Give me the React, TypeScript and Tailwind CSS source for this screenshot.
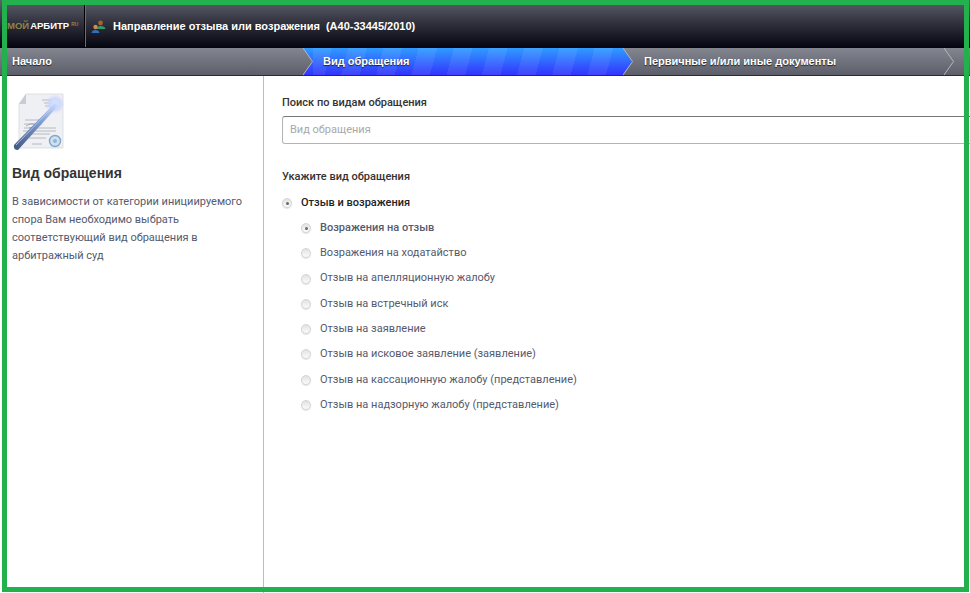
import React from "react";

const options = [
  "Возражения на отзыв",
  "Возражения на ходатайство",
  "Отзыв на апелляционную жалобу",
  "Отзыв на встречный иск",
  "Отзыв на заявление",
  "Отзыв на исковое заявление (заявление)",
  "Отзыв на кассационную жалобу (представление)",
  "Отзыв на надзорную жалобу (представление)",
];

function Radio({ checked }: { checked: boolean }) {
  return (
    <span className="relative block w-[10px] h-[10px] shrink-0 rounded-full border border-[#d4d4d4] bg-[linear-gradient(180deg,#e2e2e2,#fbfbfb)] shadow-[0_1px_1px_rgba(0,0,0,0.12)]">
      {checked && <span className="absolute left-[2.5px] top-[2.5px] w-[3px] h-[3px] rounded-full bg-[#6a6a6a]" />}
    </span>
  );
}

function Chevron({ from, to }: { from: string; to: string }) {
  return (
    <svg width="10" height="27" viewBox="0 0 10 27" className="block shrink-0">
      <defs>
        <linearGradient id={`g-${from}`} x1="0" y1="0" x2="0" y2="1">
          <stop offset="0" stopColor={from === "grey" ? "#83868f" : "#2f9cff"} />
          <stop offset="1" stopColor={from === "grey" ? "#5c5f69" : "#3333ff"} />
        </linearGradient>
        <linearGradient id={`t-${to}`} x1="0" y1="0" x2="0" y2="1">
          <stop offset="0" stopColor={to === "grey" ? "#83868f" : "#2f9cff"} />
          <stop offset="1" stopColor={to === "grey" ? "#5c5f69" : "#3333ff"} />
        </linearGradient>
      </defs>
      <rect width="10" height="27" fill={`url(#t-${to})`} />
      <path d="M0 0 L9.5 13.5 L0 27 Z" fill={`url(#g-${from})`} />
      <path d="M0 0 L9.5 13.5 L0 27" fill="none" stroke="#b4b6bc" strokeWidth="1" />
    </svg>
  );
}

function DocIcon() {
  return (
    <svg width="54" height="60" viewBox="0 0 54 60" className="block">
      <defs>
        <linearGradient id="wand" x1="0" y1="1" x2="1" y2="0">
          <stop offset="0" stopColor="#41557f" />
          <stop offset="0.6" stopColor="#7d9ad0" />
          <stop offset="1" stopColor="#cfe0ff" />
        </linearGradient>
        <radialGradient id="glow">
          <stop offset="0" stopColor="#cfe6ff" />
          <stop offset="0.6" stopColor="#c8d4ff" stopOpacity="0.8" />
          <stop offset="1" stopColor="#e6d8ff" stopOpacity="0" />
        </radialGradient>
      </defs>
      <path d="M14 2 H51 V56 H7 V12 Z" fill="#eef0f3" stroke="#d4d6da" strokeWidth="0.7" />
      <path d="M14 2 V12 H7 Z" fill="#c9ccd2" />
      <g stroke="#a7abb3" strokeWidth="0.8">
        <path d="M30 8 H40 M32 11 H40 M33 14 H40 M13 28 H28 M12 32 H30 M12 36 H44 M11 39 H44 M16 42 H38 M17 46 H34 M20 52 H30" />
      </g>
      <path d="M14 34 q6 -4 10 -1 q-4 3 -7 3" fill="none" stroke="#8b8f98" strokeWidth="0.7" />
      <circle cx="43" cy="49" r="5.5" fill="#cfe0ee" stroke="#7fa7cf" strokeWidth="1.4" />
      <circle cx="43" cy="49" r="2" fill="#8fb5d8" />
      <circle cx="43" cy="12" r="10" fill="url(#glow)" />
      <path d="M2 53 L43 11 L46 14 L6 58 Q1 58 2 53 Z" fill="url(#wand)" />
      <path d="M4 53 L43 13" stroke="#c0d0ee" strokeWidth="0.8" />
    </svg>
  );
}

function PeopleIcon() {
  return (
    <svg width="15" height="14" viewBox="0 0 15 14" className="block">
      <circle cx="9.5" cy="3" r="2.4" fill="#a8602f" />
      <path d="M5.5 9 Q6 6 9.5 6 Q14 6 14.5 9 Z" fill="#2f9d63" />
      <circle cx="4.5" cy="7" r="2.2" fill="#d08a52" />
      <path d="M0.5 13 Q1 10 4.5 10 Q8 10 8.5 13 Z" fill="#2f6fc0" />
    </svg>
  );
}

export default function App() {
  return (
    <div className="relative w-[970px] h-[593px] overflow-hidden bg-white flex flex-col font-['Liberation_Sans',Arial,sans-serif] text-[11px]">
      <header className="h-[48px] shrink-0 flex items-stretch bg-[linear-gradient(180deg,#5d5f6d_0%,#33343f_45%,#04040f_100%)]">
        <div className="w-[84px] shrink-0 flex items-center pl-[7px] pt-[5px] gap-[1px] font-bold whitespace-nowrap text-[9.5px]">
          <span className="text-[#8c8447]">МОЙ</span>
          <span className="text-white">АРБИТР</span>
          <span className="text-[#8c8447] text-[5px] ml-[1px] -mt-[3px]">RU</span>
        </div>
        <div className="w-[1px] mt-[5px] bg-black" />
        <div className="w-[1px] mt-[5px] mb-[1px] bg-[#6a6c76]" />
        <div className="flex items-center pl-[5px] pt-[5px] gap-[7px]">
          <PeopleIcon />
          <span className="font-bold text-white whitespace-pre text-[11px]">Направление отзыва или возражения  (А40-33445/2010)</span>
        </div>
      </header>

      <nav className="h-[27px] shrink-0 flex items-stretch font-bold text-white text-[11px] whitespace-nowrap [text-shadow:0_1px_1px_#222] border-b-0 bg-[linear-gradient(180deg,#83868f,#5c5f69)]">
        <div className="w-[303px] shrink-0 flex items-center pl-[12px]">Начало</div>
        <Chevron from="grey" to="blue" />
        <div className="w-[310px] shrink-0 flex items-center pl-[10px] bg-[repeating-linear-gradient(105deg,rgba(255,255,255,0.07)_0_18px,transparent_18px_34px),linear-gradient(180deg,#2f9cff,#3333ff)]">Вид обращения</div>
        <Chevron from="blue" to="grey" />
        <div className="w-[311px] shrink-0 flex items-center pl-[11px]">Первичные и/или иные документы</div>
        <Chevron from="grey" to="grey" />
        <div className="flex items-center pl-[10px] text-[#4a7fd0]">.</div>
      </nav>
      <div className="h-[1px] shrink-0 bg-[#2b2c33]" />

      <div className="flex-1 flex min-h-0">
        <aside className="w-[264px] shrink-0 border-r border-[#bdbdbd] pl-[12px] pr-[20px] pt-[16px]">
          <DocIcon />
          <h2 className="mt-[12px] text-[14px] leading-[18px] font-bold text-[#333]">Вид обращения</h2>
          <p className="mt-[11px] text-[11px] leading-[18px] text-[#555a6e] font-['Roboto',sans-serif]">
            В зависимости от категории инициируемого спора Вам необходимо выбрать соответствующий вид обращения в арбитражный суд
          </p>
        </aside>

        <main className="flex-1 min-w-0 overflow-hidden pl-[18px] pt-[20px] font-['Roboto',sans-serif]">
          <label className="block text-[11px] leading-[14px] font-medium text-[#333]">Поиск по видам обращения</label>
          <div className="mt-[6px] w-[720px] h-[28px] flex items-center pl-[7px] rounded-[3px] border border-[#b4b4b4] border-t-[#777] text-[11px] text-[#a9a9a9]">
            Вид обращения
          </div>
          <div className="mt-[26px] text-[11px] leading-[14px] font-medium text-[#333]">Укажите вид обращения</div>
          <div className="mt-[12px] flex items-center gap-[9px] h-[14px]">
            <Radio checked />
            <span className="font-medium text-[#222]">Отзыв и возражения</span>
          </div>
          <ul className="mt-[11px] pl-[19px] flex flex-col gap-[11.3px]">
            {options.map((o, i) => (
              <li key={o} className="flex items-center gap-[9px] h-[14px]">
                <Radio checked={i === 0} />
                <span className={i === 0 ? "font-medium text-[#555a6e]" : "text-[#555a6e]"}>{o}</span>
              </li>
            ))}
          </ul>
        </main>
      </div>

      <div className="absolute left-[2px] top-0 w-[967px] h-[592px] border-[5px] border-[#22b14c] pointer-events-none" />
    </div>
  );
}
